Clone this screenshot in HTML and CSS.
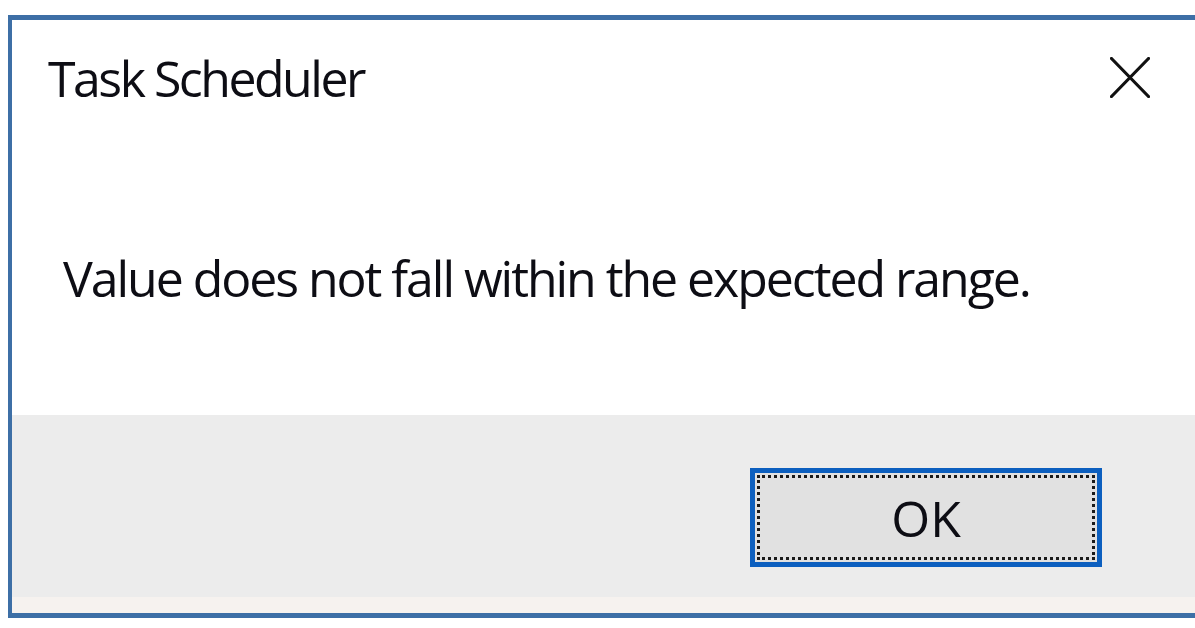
FILE: index.html
```html
<!DOCTYPE html>
<html lang="en">
<head>
<meta charset="utf-8">
<title>Task Scheduler</title>
<link rel="stylesheet" href="styles.css">
</head>
<body>
<div class="dialog">
  <div class="main">
    <div class="titlebar">
      <span class="title">Task Scheduler</span>
      <span class="close" aria-label="Close">
        <svg width="40" height="41" viewBox="0 0 40 41"><path d="M1.5 1.5 L38.5 39.5 M38.5 1.5 L1.5 39.5" stroke="#111" stroke-width="3.2" stroke-linecap="round" fill="none"/></svg>
      </span>
    </div>
    <p class="message">Value does not fall within the expected range.</p>
  </div>
  <div class="footer">
    <button class="ok">OK</button>
  </div>
</div>
</body>
</html>
```
FILE: styles.css
```css
html, body {
  margin: 0;
  padding: 0;
  background: #ffffff;
  overflow: hidden;
}
body {
  font-family: "Open Sans", "Noto Sans", sans-serif;
  color: #0d0d14;
}
.dialog {
  margin: 15px 0 0 8px;
  height: 593px;
  border-top: 5px solid #3d6fa6;
  border-left: 4px solid #3d6fa6;
  border-bottom: 5px solid #3d6fa6;
  display: flex;
  flex-direction: column;
  background: #fff;
}
.main {
  flex: 1;
  display: flex;
  flex-direction: column;
}
.titlebar {
  display: flex;
  align-items: flex-start;
  padding: 24px 45px 0 36px;
  height: 68px;
}
.title {
  flex: 1;
  font-size: 50px;
  line-height: 68px;
  letter-spacing: -2.5px;
}
.close {
  display: block;
  margin-top: 13px;
  width: 40px;
  height: 41px;
}
.close svg { display: block; }
.message {
  margin: 132px 0 0 51px;
  font-size: 50px;
  line-height: 68px;
  letter-spacing: -2.05px;
}
.footer {
  height: 198px;
  flex: none;
  background: linear-gradient(#ececec 182px, #f6f2ef 182px);
  display: flex;
  align-items: flex-start;
  padding: 53px 0 0 738px;
  box-sizing: border-box;
}
.ok {
  position: relative;
  width: 352px;
  height: 99px;
  box-sizing: border-box;
  border: 5px solid #0c5fbf;
  background: #e1e1e1;
  font-family: "Open Sans", "Noto Sans", sans-serif;
  font-size: 50px;
  color: #0d0d14;
  padding: 0;
  margin: 0;
}
.ok::after {
  content: "";
  position: absolute;
  inset: 2px;
  border: 3px dotted #1a1a1a;
}
```
